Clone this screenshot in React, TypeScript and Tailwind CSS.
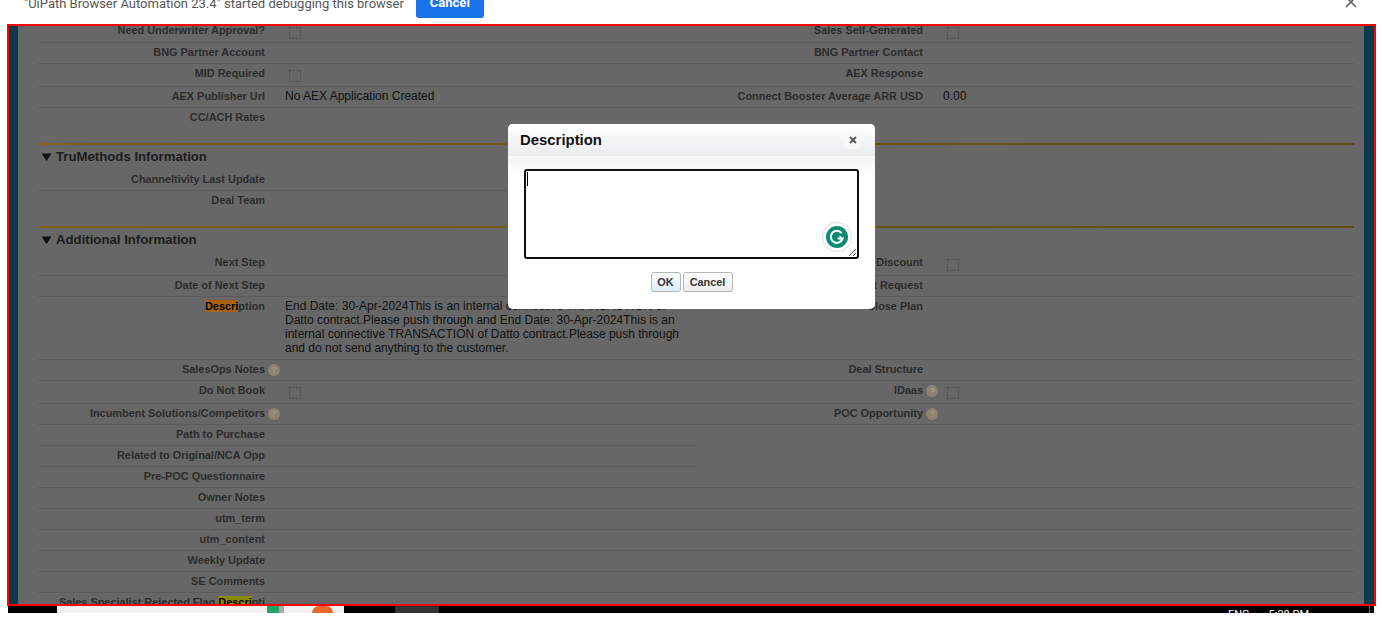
const labelFont = "font-['Liberation_Sans',Arial,sans-serif]"

type Cell = {
  label?: string
  value?: string
  check?: boolean
  help?: boolean
  mark?: string
  markClass?: string
  markRest?: string
  prefix?: string
}

type RowData = {
  left: Cell
  right?: Cell
  h: string
  noRightLine?: boolean
  last?: boolean
}

function Check() {
  return <span className="block w-3 h-3 border border-dotted border-[#4f4f4f] mt-[4px] ml-[4px]" />
}

function Help() {
  return (
    <span className="flex items-center justify-center w-3 h-3 rounded-full bg-[#8e8270] text-[#a59a86] text-[9px] font-bold -ml-[17px] mr-[5px] mt-[2px] shrink-0">
      ?
    </span>
  )
}

function FieldCell({ cell, labelW }: { cell: Cell; labelW: string }) {
  return (
    <div className="flex">
      <div className={`${labelW} shrink-0 text-right text-[10.92px] leading-[14px] font-bold text-[#2c2c2c] whitespace-nowrap`}>
        {cell.prefix}
        {cell.mark && <span className={cell.markClass}>{cell.mark}</span>}
        {cell.markRest}
        {cell.label}
      </div>
      <div className="flex flex-1 min-w-0 pl-5 text-[12px] leading-[14px] text-[#111]">
        {cell.help && <Help />}
        {cell.check ? <Check /> : <span>{cell.value}</span>}
      </div>
    </div>
  )
}

function FieldRow({ row }: { row: RowData }) {
  return (
    <div className={`flex ${row.h}`}>
      <div className={`w-[659px] pt-[2px] ${row.last ? '' : 'border-b border-[#5c5c5c]'}`}>
        <FieldCell cell={row.left} labelW="w-[227px]" />
      </div>
      <div className={`w-[657px] pt-[2px] ${row.noRightLine || row.last ? '' : 'border-b border-[#5c5c5c]'}`}>
        {row.right && <FieldCell cell={row.right} labelW="w-[226px]" />}
      </div>
    </div>
  )
}

function SectionHead({ title }: { title: string }) {
  return (
    <div className="h-[27px] w-[1316px]">
      <div className="h-[2px] bg-gradient-to-r from-[#7d6519] to-[#5c4e14]" />
      <div className="h-[25px] pb-[2px] flex items-center pl-[3px] text-[#1c1c1c]">
        <svg width="11" height="8" viewBox="0 0 11 8" className="mr-[4px] mt-px">
          <path d="M0.5 0.5h10L5.5 8z" fill="#111" />
        </svg>
        <span className="text-[13.2px] font-bold">{title}</span>
      </div>
    </div>
  )
}

const topRows: RowData[] = [
  { h: 'h-[22px]', left: { label: 'Need Underwriter Approval?', check: true }, right: { label: 'Sales Self-Generated', check: true } },
  { h: 'h-[21px]', left: { label: 'BNG Partner Account' }, right: { label: 'BNG Partner Contact' } },
  { h: 'h-[23px]', left: { label: 'MID Required', check: true }, right: { label: 'AEX Response' } },
  {
    h: 'h-[21px]',
    left: { label: 'AEX Publisher Url', value: 'No AEX Application Created' },
    right: { label: 'Connect Booster Average ARR USD', value: '0.00' },
  },
  { h: 'h-[21px]', left: { label: 'CC/ACH Rates' }, last: true },
]

const truRows: RowData[] = [
  { h: 'h-[21px]', left: { label: 'Channeltivity Last Update' }, noRightLine: true },
  { h: 'h-[21px]', left: { label: 'Deal Team' }, last: true },
]

const descriptionText =
  'End Date: 30-Apr-2024This is an internal connective TRANSACTION of Datto contract.Please push through and End Date: 30-Apr-2024This is an internal connective TRANSACTION of Datto contract.Please push through and do not send anything to the customer.'

const addRows: RowData[] = [
  { h: 'h-[23px]', left: { label: 'Next Step' }, right: { label: 'Discount', check: true } },
  { h: 'h-[21px]', left: { label: 'Date of Next Step' }, right: { label: 'Discount Request' } },
  {
    h: 'h-[63px]',
    left: { mark: 'Descri', markClass: 'bg-[#a8620f] text-black', markRest: 'ption', value: descriptionText },
    right: { label: 'Close Plan' },
  },
  { h: 'h-[21px]', left: { label: 'SalesOps Notes', help: true }, right: { label: 'Deal Structure' } },
  { h: 'h-[23px]', left: { label: 'Do Not Book', check: true }, right: { label: 'IDaas', help: true, check: true } },
  { h: 'h-[21px]', left: { label: 'Incumbent Solutions/Competitors', help: true }, right: { label: 'POC Opportunity', help: true } },
  { h: 'h-[21px]', left: { label: 'Path to Purchase' }, noRightLine: true },
  { h: 'h-[21px]', left: { label: 'Related to Original/NCA Opp' }, noRightLine: true },
  { h: 'h-[21px]', left: { label: 'Pre-POC Questionnaire' }, right: {} },
  { h: 'h-[21px]', left: { label: 'Owner Notes' }, right: {} },
  { h: 'h-[21px]', left: { label: 'utm_term' }, right: {} },
  { h: 'h-[21px]', left: { label: 'utm_content' }, right: {} },
  { h: 'h-[21px]', left: { label: 'Weekly Update' }, right: {} },
  { h: 'h-[21px]', left: { label: 'SE Comments' }, right: {} },
  {
    h: 'h-[21px]',
    left: { prefix: 'Sales Specialist Rejected Flag ', mark: 'Descri', markClass: 'bg-[#8a8a00] text-black', markRest: 'pti' },
    last: true,
  },
]

function DescriptionModal() {
  return (
    <div className="absolute left-[499px] top-[98px] w-[367px] h-[185px] bg-white rounded-[5px] overflow-hidden z-20">
      <div className="h-[33px] bg-gradient-to-b from-white to-[#e9eced] border-b border-[#f8f9f9] flex items-center justify-between pl-3 pr-[14px]">
        <span className="text-[14.9px] font-bold text-[#111] mt-px">Description</span>
        <span className="w-[17px] h-[17px] bg-[#f6f7f7] rounded-sm flex items-center justify-center">
          <svg width="8" height="8" viewBox="0 0 8 8">
            <path d="M1 1l6 6M7 1l-6 6" stroke="#555" strokeWidth="1.8" />
          </svg>
        </span>
      </div>
      <div className="h-[18px] -mb-[18px] bg-gradient-to-b from-[#f3f4f4] to-white" />
      <div className="relative mx-4 mt-[12px] w-[335px] h-[90px] border-2 border-[#111] rounded-[3px] bg-white">
        <span className="absolute left-[1px] top-[1px] w-px h-[14px] bg-black" />
        <span className="absolute right-[5px] bottom-[5px] w-[30px] h-[30px] rounded-full bg-white border border-[#dcdce6] flex items-center justify-center">
          <span className="w-[22px] h-[22px] rounded-full bg-[#0b8a74] flex items-center justify-center">
            <svg width="16" height="16" viewBox="0 0 16 16" fill="none">
              <path d="M12.6 4.2A6 6 0 1 0 13.6 9.6H8.6" stroke="#fff" strokeWidth="2" />
              <path d="M10.4 6.8l3.2 2.8-2.4 2.6" stroke="#fff" strokeWidth="1.1" />
            </svg>
          </span>
        </span>
        <svg width="9" height="9" viewBox="0 0 9 9" className="absolute right-0 bottom-0">
          <path d="M1 8l7-7M5 8l3-3" stroke="#555" strokeWidth="1" />
        </svg>
      </div>
      <div className="flex justify-center gap-[2px] mt-[13px]">
        <button className="w-[30px] h-5 rounded-[3px] border border-[#b5b5b5] bg-gradient-to-b from-[#fff] to-[#dbeefb] text-[10.9px] font-bold text-[#333]">OK</button>
        <button className="w-[50px] h-5 rounded-[3px] border border-[#b5b5b5] bg-gradient-to-b from-white to-[#ececec] text-[10.9px] font-bold text-[#333]">Cancel</button>
      </div>
    </div>
  )
}

export default function App() {
  return (
    <div className={`w-[1382px] h-[630px] bg-white overflow-hidden ${labelFont}`}>
      {/* debugging infobar, scrolled off the top */}
      <div className="h-6 flex items-start overflow-hidden">
        <span className="ml-[24px] -mt-[6px] text-[13px] leading-5 text-[#555] font-['Roboto',sans-serif] whitespace-nowrap">
          "UiPath Browser Automation 23.4" started debugging this browser
        </span>
        <span className="ml-3 w-[68px] h-[18px] bg-[#1a73e8] rounded-b-[3px] text-white text-[13px] font-bold text-center leading-[5px] font-['Roboto',sans-serif]">
          Cancel
        </span>
        <svg width="12" height="8" viewBox="0 0 12 8" className="ml-auto mr-[25px]">
          <path d="M1 -3L11 7M11 -3L1 7" stroke="#666" strokeWidth="1.7" />
        </svg>
      </div>

      <div className="relative ml-[7px] w-[1369px] h-[582px] border-2 border-[#f00] overflow-hidden flex bg-[#676767]">
        <div className="w-[9px] shrink-0 bg-[#0a3a4c]" />
        <div className="flex-1 min-w-0 pl-5 -mt-[5px]">
          {topRows.map((r, i) => (
            <FieldRow key={i} row={r} />
          ))}
          <div className="h-[14px]" />
          <SectionHead title="TruMethods Information" />
          {truRows.map((r, i) => (
            <FieldRow key={i} row={r} />
          ))}
          <div className="h-[14px]" />
          <SectionHead title="Additional Information" />
          {addRows.map((r, i) => (
            <FieldRow key={i} row={r} />
          ))}
        </div>
        <div className="w-[10px] shrink-0 bg-[#0a3a4c]" />
        <DescriptionModal />
      </div>

      {/* taskbar sliver under the frame */}
      <div className="ml-[8px] w-[1366px] h-[7px] bg-black flex overflow-hidden">
        <div className="ml-[49px] w-[287px] h-full bg-[#f1f1f1] flex">
          <span className="ml-[210px] w-3 h-full bg-[#1fa463]" />
          <span className="w-[5px] h-full bg-[#a9a9a9]" />
          <span className="ml-[28px] w-[21px] h-full rounded-t-full bg-[#e8672a]" />
        </div>
        <div className="ml-[51px] w-[44px] h-full bg-[#333]" />
        <span className="ml-[789px] mt-[1px] text-[11px] leading-4 text-white whitespace-nowrap font-['Roboto',sans-serif]">ENG</span>
        <span className="ml-[19px] mt-[1px] text-[11px] leading-4 text-white whitespace-nowrap font-['Roboto',sans-serif]">5:28 PM</span>
        <span className="ml-[60px] w-px h-full bg-[#666]" />
      </div>
    </div>
  )
}
